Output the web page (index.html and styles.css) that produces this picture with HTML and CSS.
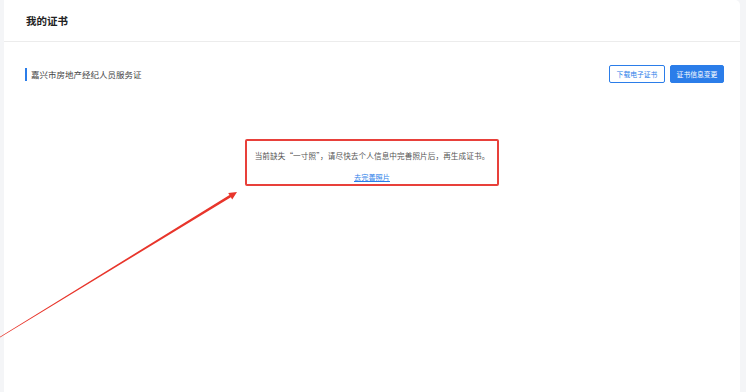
FILE: index.html
```html
<!DOCTYPE html>
<html lang="zh-CN">
<head>
  <meta charset="UTF-8">
  <title>我的证书</title>
  <link rel="stylesheet" href="styles.css">
</head>
<body>

<div class="card">
  <div class="card-header">我的证书</div>

  <div class="cert-bar">
    <div class="cert-name">嘉兴市房地产经纪人员服务证</div>
    <div class="cert-actions">
      <button class="btn btn-outline">下载电子证书</button>
      <button class="btn btn-primary">证书信息变更</button>
    </div>
  </div>

  <div class="notice">
    <p class="notice-text">当前缺失“一寸照”，请尽快去个人信息中完善照片后，再生成证书。</p>
    <a class="notice-link" href="#">去完善照片</a>
  </div>
</div>

<!-- annotation arrow pointing at the notice -->
<svg class="arrow" width="746" height="392" viewBox="0 0 746 392">
  <polygon points="0,336.7 229.5,195.1 228.2,193 237,192 232.2,199.4 230.9,197.3 0,337.4" fill="#e8352b"/>
</svg>

</body>
</html>
```

FILE: styles.css
```css
body {
  margin: 0;
  background-color: #f4f5f7;
  font-family: "Noto Sans CJK SC", "Noto Sans", sans-serif;
  color: #333;
}

.card {
  margin-left: 4px;
  width: 736px;
  height: 392px;
  background-color: #fff;
  border-top-right-radius: 5px;
}

.card-header {
  height: 41px;
  line-height: 41px;
  padding-left: 22px;
  font-size: 10.5px;
  font-weight: bold;
  color: #222;
  border-bottom: 1px solid #ececec;
}

.cert-bar {
  display: flex;
  align-items: center;
  justify-content: space-between;
  margin-top: 23px;
  padding: 0 16px 0 21px;
  height: 18px;
}

.cert-name {
  border-left: 2px solid #2b7de9;
  padding-left: 4px;
  font-size: 8.5px;
  line-height: 13px;
  color: #444;
}

.cert-actions { display: flex; gap: 5px; }

.btn {
  height: 18px;
  padding: 0;
  font-family: inherit;
  font-size: 6.8px;
  border-radius: 2px;
  cursor: pointer;
}
.btn-outline {
  background-color: #fff;
  color: #2b7de9;
  border: 1px solid #2b7de9;
  width: 56px;
}
.btn-primary {
  background-color: #2b7de9;
  color: #fff;
  border: 1px solid #2b7de9;
  width: 54px;
}

.notice {
  margin: 56px auto 0;
  width: 250px;
  height: 43px;
  border: 2px solid #e8403a;
  border-radius: 2px;
  text-align: center;
}
.notice-text {
  margin: 9px 0 0;
  font-size: 7.6px;
  line-height: 11px;
  letter-spacing: 0.1px;
  color: #555;
  white-space: nowrap;
}
.notice-link {
  display: inline-block;
  margin-top: 4px;
  font-size: 7.2px;
  line-height: 11px;
  color: #2b7de9;
}

.arrow {
  position: absolute;
  left: 0;
  top: 0;
  pointer-events: none;
}
```
